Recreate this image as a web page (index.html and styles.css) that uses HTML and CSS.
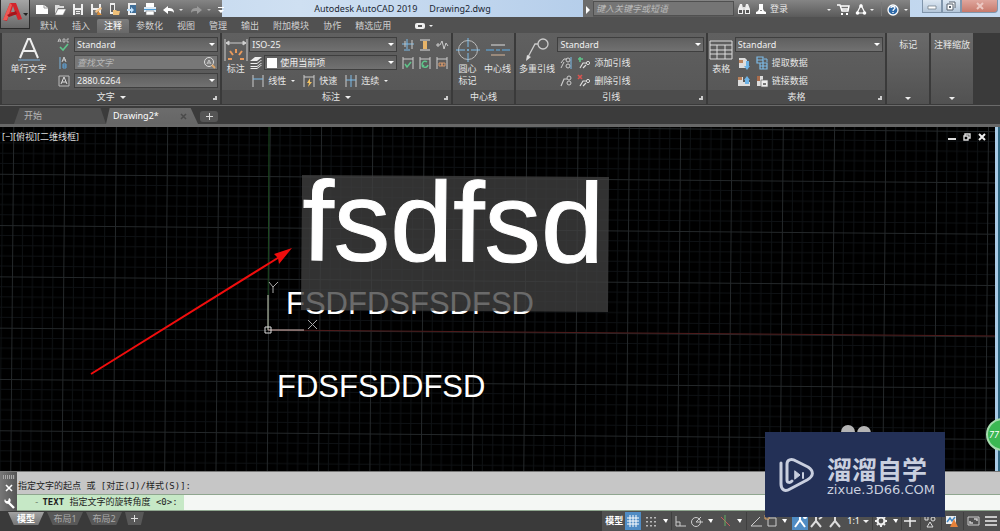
FILE: index.html
```html
<!DOCTYPE html>
<html lang="zh-CN">
<head>
<meta charset="utf-8">
<title>Autodesk AutoCAD 2019</title>
<link rel="stylesheet" href="styles.css">
</head>
<body>
<div class="app">
  <header class="top">
    <button class="logo" aria-label="A">
      <svg width="28" height="28" viewBox="0 0 28 28">
        <path d="M2 20 9 3h6l6 16-4 1-2-5H8l-2 6z" fill="#d3252b"/>
        <path d="m12 6-2 6h4z" fill="#8e8e8e"/>
        <path d="M2 20 9 3l2 2-5 15z" fill="#ef5a55"/>
        <path d="m6 15 9-4 1 3-8 3z" fill="#a3161c"/>
        <path d="M22 13h5l-2 3z" fill="#222"/>
      </svg>
    </button>
    <div class="title-bar">
      <div class="quick">
        <button aria-label="新建"><svg width="14" height="14" viewBox="0 0 14 14"><path d="M1 3h8l4 3v6H1z" fill="#fff"/><path d="M9 3v3h4" fill="none" stroke="#999"/></svg></button>
        <button aria-label="打开"><svg width="14" height="14" viewBox="0 0 14 14"><path d="M2 12V3h4l1 1h4v2H5z" fill="#ddd"/><path d="M5 7h8l-3 6H2z" fill="#fff" stroke="#777" stroke-width=".5"/></svg></button>
        <button aria-label="保存"><svg width="14" height="14" viewBox="0 0 14 14"><path d="M2 2h10v11H2z" fill="#eee"/><path d="M4 2h6v4H4zM4 8h6v5H4z" fill="#777"/><path d="M5 9h4v1H5zM5 11h4v1H5z" fill="#eee"/></svg></button>
        <button aria-label="另存为"><svg width="14" height="14" viewBox="0 0 14 14"><path d="M2 2h10v11H2z" fill="#eee"/><path d="M4 2h6v4H4zM4 8h6v5H4z" fill="#777"/><path d="m6 9 6-4 1 2-6 4z" fill="#f3c58d"/><path d="m9 9 4 4H8z" fill="#d98a32"/></svg></button>
        <button aria-label="从 Web 打开"><svg width="14" height="14" viewBox="0 0 14 14"><path d="M3 1h5v11H3z" fill="#eee"/><path d="M4 3h3v7H4z" fill="#666"/><path d="M6 13V8h3l1 1h3l-1 4z" fill="#efc078"/></svg></button>
        <button aria-label="保存到 Web"><svg width="14" height="14" viewBox="0 0 14 14"><path d="M3 1h8v12H3z" fill="#eee"/><path d="M5 3h6v8H5z" fill="#3f6e98"/><path d="M2 7h4V5l3 3-3 3V9H2z" fill="#bfe2ff"/></svg></button>
        <button aria-label="打印"><svg width="14" height="14" viewBox="0 0 14 14"><path d="M3 1h8v4H3z" fill="#fff"/><path d="M1 5h12v5H1z" fill="#dce9f4"/><path d="M1 7h12v1H1z" fill="#4b9bd6"/><path d="M3 9h8v4H3z" fill="#fff" stroke="#777" stroke-width=".6"/></svg></button>
        <button class="wide" aria-label="放弃"><svg width="24" height="14" viewBox="0 0 24 14"><path d="M2 8l5-4v2c4 0 6 1 6 5-1-2-3-2-6-2v3z" fill="#fff"/><path d="M18 7h4l-2 2z" fill="#ddd"/></svg></button>
        <button class="wide" aria-label="重做"><svg width="24" height="14" viewBox="0 0 24 14"><path d="M13 8 8 4v2c-4 0-6 1-6 5 1-2 3-2 6-2v3z" fill="#9a9a9a"/><path d="M18 7h4l-2 2z" fill="#aaa"/></svg></button>
        <button aria-label="自定义"><svg width="12" height="14" viewBox="0 0 12 14"><path d="M1 5h6v1H1zM1 8h6l-3 3z" fill="#fff"/></svg></button>
      </div>
      <div class="title"><span>Autodesk AutoCAD 2019</span><span>Drawing2.dwg</span></div>
      <div class="info">
        <button class="expand" aria-label="展开"><svg width="10" height="14" viewBox="0 0 10 14"><path d="M3 4l4 4-4 4z" fill="#fff"/></svg></button>
        <input class="search" type="text" placeholder="键入关键字或短语" aria-label="搜索">
        <button aria-label="查找"><svg width="16" height="14" viewBox="0 0 16 14"><path d="M4 2h2l1 4v6H2V7zM10 2h2l2 5v5H9V6z" fill="#eee"/><path d="M3 8h3v3H3zM10 8h3v3h-3z" fill="#555"/><path d="M7 5h2v3H7z" fill="#ddd"/></svg></button>
        <button class="login"><svg width="12" height="14" viewBox="0 0 12 14"><path d="M4 2h4v5l1 2 2 1v2H1v-2l2-1 1-2z" fill="#fff"/><path d="M5 8h2v1H5z" fill="#888"/></svg>登录</button>
        <button aria-label="商店"><svg width="30" height="14" viewBox="0 0 30 14"><path d="M2 7h4l-2 2z" fill="#eee"/><path d="M12 3h3l2 6h6l1-5h-8M16 7h8" fill="none" stroke="#fff" stroke-width="1.4"/><path d="M16 11h2v2h-2zM21 11h2v2h-2z" fill="#fff"/></svg></button>
        <button aria-label="应用程序"><svg width="20" height="14" viewBox="0 0 20 14"><path d="m6 3 4 8H2z" fill="none" stroke="#fff" stroke-width="1.2"/><circle cx="6" cy="4" r="1.8" fill="#fff"/><circle cx="2.5" cy="11" r="1.8" fill="#fff"/><circle cx="9.5" cy="11" r="1.8" fill="#fff"/><path d="M15 7h4l-2 2z" fill="#eee"/></svg></button>
        <button class="help" aria-label="帮助"><svg width="24" height="14" viewBox="0 0 24 14"><circle cx="7" cy="8" r="5" fill="#2f6aa8" stroke="#fff" stroke-width="1.3"/><path d="M5 6c0-2 4-2 4 0 0 1-2 1-2 3M7 10v1" fill="none" stroke="#fff" stroke-width="1.3"/><path d="M18 7h4l-2 2z" fill="#eee"/></svg></button>
      </div>
      <div class="window-buttons">
        <button aria-label="最小化"><svg width="12" height="10" viewBox="0 0 12 10"><path d="M2 5h8v3H2z" fill="#fff" stroke="#66727e" stroke-width=".7"/></svg></button>
        <button aria-label="还原"><svg width="12" height="10" viewBox="0 0 12 10"><path d="M4 1h6v6M2 3h6v6H2z" fill="#fff" stroke="#56616c"/><path d="M4 5h2v2H4z" fill="#56616c"/></svg></button>
        <button class="close" aria-label="关闭"><svg width="12" height="10" viewBox="0 0 12 10"><path d="m3 2 6 6M9 2 3 8" stroke="#ecc8c2" stroke-width="2"/></svg></button>
      </div>
    </div>
    <nav class="menu">
      <button>默认</button><button>插入</button><button class="active">注释</button><button>参数化</button><button>视图</button><button>管理</button><button>输出</button><button>附加模块</button><button>协作</button><button>精选应用</button>
      <button class="menu-toggle" aria-label="功能区显示"><svg width="18" height="8" viewBox="0 0 18 8"><rect y="1" width="10" height="6" rx="2" fill="#eee"/><path d="M3 3h4v2H3z" fill="#555"/><path d="M14 3h4l-2 2z" fill="#eee"/></svg></button>
    </nav>
  </header>

  <section class="ribbon">
    <div class="panel p-text">
      <div class="panel-body">
        <button class="big"><svg width="26" height="26" viewBox="0 0 26 26"><path d="M4 21 12 2h2l8 19M7 14h12" fill="none" stroke="#eee" stroke-width="2"/><path d="M2 23h22" stroke="#76a9d6"/></svg><span>单行文字</span><i class="caret"></i></button>
        <div class="rows">
          <div class="row"><svg class="ic" width="14" height="14" viewBox="0 0 14 14"><path d="m1 4 1-3h1l1 3M1 3h3M6 1v3h2V1zM12 1h-2v3h2" fill="none" stroke="#ccc" stroke-width=".8"/><path d="m3 9 3 3 5-6" fill="none" stroke="#5fc48a" stroke-width="1.6"/></svg><label class="pick"><select aria-label="文字样式"><option>Standard</option></select></label></div>
          <div class="row"><svg class="ic" width="14" height="14" viewBox="0 0 14 14"><path d="M3 1v12" stroke="#7bb4de"/><path d="m5 6 2-5 2 5M6 4h3" fill="none" stroke="#ccc"/><path d="M6 8h3v4H6zM6 10h3" fill="none" stroke="#5fa3d8"/></svg><div class="find"><input type="text" placeholder="查找文字" aria-label="查找文字"><svg width="14" height="13" viewBox="0 0 14 13"><circle cx="6" cy="6" r="4.5" fill="none" stroke="#ddd"/><path d="m4 8 2-4 2 4M5 7h2" fill="none" stroke="#ddd" stroke-width=".8"/><path d="m9 9 3 3" stroke="#d8a368" stroke-width="2"/></svg></div></div>
          <div class="row"><svg class="ic" width="14" height="14" viewBox="0 0 14 14"><path d="M2 2h10v10H2z" fill="none" stroke="#bbb"/><path d="m4 10 3-7 3 7M5 8h4" fill="none" stroke="#ddd"/></svg><label class="pick"><select aria-label="文字高度"><option>2880.6264</option></select></label></div>
        </div>
      </div>
      <div class="panel-title"><span>文字</span><i class="caret"></i><i class="corner"></i></div>
    </div>

    <div class="panel p-dim">
      <div class="panel-body">
        <button class="big slim"><svg width="24" height="26" viewBox="0 0 24 26"><path d="M1 2v22M23 2v22M2 6h20M2 6l3-2v4zM22 6l-3-2v4z" fill="#ddd" stroke="#ccc"/><path d="m12 12v4M6 14l3 4M18 14l-3 4M4 22h4M16 22h4" stroke="#e99a5c" stroke-width="2"/></svg><span>标注</span></button>
        <div class="rows">
          <div class="row"><label class="pick"><select aria-label="标注样式"><option>ISO-25</option></select></label>
            <span class="trio">
              <svg width="14" height="14" viewBox="0 0 14 14"><path d="M1 6h12M6 1v10M3 12h6" stroke="#7dbbe8"/><path d="M11 2v9M4 3v6" stroke="#ccc"/></svg>
              <svg width="14" height="14" viewBox="0 0 14 14"><path d="M2 2h10M2 12h10" stroke="#ddd"/><path d="M5 3h4v8H5z" fill="#e7b469"/></svg>
              <svg width="14" height="14" viewBox="0 0 14 14"><path d="M1 7h4l2-4 2 8 2-6 2 3M3 5v4" fill="none" stroke="#ccc"/></svg>
            </span></div>
          <div class="row"><svg class="ic" width="14" height="14" viewBox="0 0 14 14"><path d="m1 5 5-4h7L8 5zM1 8l1-1h6l4-3h1L8 8zM1 11l1-1h6l4-3h1l-5 4zM1 13l1-1h6l4-3h1l-5 4z" fill="#eee"/></svg><label class="pick swatch"><select aria-label="标注图层"><option>使用当前项</option></select></label>
            <span class="trio">
              <svg width="14" height="14" viewBox="0 0 14 14"><path d="M2 1v12M12 1v12M2 3h10" stroke="#ccc"/><path d="m4 8 2 3 4-5" fill="none" stroke="#5fc48a" stroke-width="1.5"/></svg>
              <svg width="14" height="14" viewBox="0 0 14 14"><path d="M2 1v12M12 1v12M2 3h10" stroke="#ccc"/><path d="M9 6a3 3 0 1 0 1 3M4 11l2-2" fill="none" stroke="#5fc48a" stroke-width="1.5"/></svg>
              <svg width="14" height="14" viewBox="0 0 14 14"><path d="M2 1v12M12 1v12M2 3h10" stroke="#ccc"/><path d="M4 7h3v3H4zM7 7h3v3H7z" fill="none" stroke="#d7986a"/></svg>
            </span></div>
          <div class="row tools">
            <button><svg width="14" height="14" viewBox="0 0 14 14"><path d="M2 1v12M12 1v12" stroke="#ccc"/><path d="M2 5h10" stroke="#7dbbe8"/></svg>线性<i class="caret"></i></button>
            <button><svg width="14" height="14" viewBox="0 0 14 14"><path d="M2 1v12M12 1v12M2 3h10" stroke="#ccc"/><path d="m8 4-3 5h2l-1 4 4-5H8z" fill="#f0c060"/></svg>快速</button>
            <button><svg width="14" height="14" viewBox="0 0 14 14"><path d="M2 1v12M12 1v12" stroke="#ccc"/><path d="M7 1v12M2 6h10" stroke="#7dbbe8"/></svg>连续<i class="caret"></i></button>
          </div>
        </div>
      </div>
      <div class="panel-title"><span>标注</span><i class="caret"></i><i class="corner"></i></div>
    </div>

    <div class="panel p-center">
      <div class="panel-body">
        <button class="big half"><svg width="24" height="26" viewBox="0 0 24 26"><circle cx="12" cy="13" r="9.5" fill="none" stroke="#bbb"/><path d="M12 1v9M12 12v2M12 16v9M0 13h9M11 13h2M15 13h9" stroke="#7dbbe8"/></svg><span>圆心<br>标记</span></button>
        <button class="big half"><svg width="24" height="26" viewBox="0 0 24 26"><path d="M5 8h14" stroke="#ddd"/><path d="M5 18h14" stroke="#d8b79a"/><path d="M0 13h8M10 13h4M16 13h8" stroke="#5fb0ea"/></svg><span>中心线</span></button>
      </div>
      <div class="panel-title"><span>中心线</span></div>
    </div>

    <div class="panel p-leader">
      <div class="panel-body">
        <button class="big mid"><svg width="26" height="26" viewBox="0 0 26 26"><circle cx="19" cy="7" r="5" fill="none" stroke="#ccc" stroke-width="1.3"/><path d="M14 7h-3L4 20" fill="none" stroke="#ccc" stroke-width="1.3"/><path d="m2 24 1-6 4 2z" fill="#ddd"/></svg><span>多重引线</span></button>
        <div class="rows">
          <div class="row"><label class="pick"><select aria-label="多重引线样式"><option>Standard</option></select></label></div>
          <div class="row tools tight">
            <button aria-label="对齐"><svg width="14" height="14" viewBox="0 0 14 14"><path d="m2 12 3-6M5 3h3M2 7l3-4" fill="none" stroke="#ccc"/><circle cx="9" cy="4" r="2" fill="none" stroke="#ccc"/><circle cx="9" cy="10" r="2" fill="none" stroke="#ccc"/><path d="M12 1v12" stroke="#7dbbe8"/></svg></button>
            <button><svg width="14" height="14" viewBox="0 0 14 14"><path d="M1 3h5M3 1v5" stroke="#5fc48a" stroke-width="1.6"/><path d="m3 12 3-5h3M6 12l3-3" fill="none" stroke="#ddd" stroke-width="1.2"/><circle cx="11" cy="7" r="1.6" fill="none" stroke="#ddd"/></svg>添加引线</button>
          </div>
          <div class="row tools tight">
            <button aria-label="合并"><svg width="14" height="14" viewBox="0 0 14 14"><path d="m2 12 3-7h3" fill="none" stroke="#ccc" stroke-width="1.2"/><circle cx="10" cy="4" r="2" fill="none" stroke="#ccc"/><circle cx="10" cy="9" r="2" fill="none" stroke="#ccc"/></svg></button>
            <button><svg width="14" height="14" viewBox="0 0 14 14"><path d="m1 1 4 4M5 1 1 5" stroke="#d9534f" stroke-width="1.6"/><path d="m3 12 3-5h3M6 12l3-3" fill="none" stroke="#ddd" stroke-width="1.2"/><circle cx="11" cy="7" r="1.6" fill="none" stroke="#ddd"/></svg>删除引线</button>
          </div>
        </div>
      </div>
      <div class="panel-title"><span>引线</span><i class="corner"></i></div>
    </div>

    <div class="panel p-table">
      <div class="panel-body">
        <button class="big slim"><svg width="24" height="26" viewBox="0 0 24 26"><path d="M1 4h22v18H1zM1 8h22M1 13h22M1 17h22M8 8v14M16 8v14" fill="none" stroke="#ddd"/></svg><span>表格</span></button>
        <div class="rows">
          <div class="row"><label class="pick"><select aria-label="表格样式"><option>Standard</option></select></label></div>
          <div class="row tools tight">
            <button aria-label="下载源"><svg width="14" height="14" viewBox="0 0 14 14"><path d="M2 2h6l2 2v8H2z" fill="#ddd"/><path d="M2 4h4v3H2z" fill="#b9825c"/><path d="M9 5v5H7l3 4 3-4h-1V5z" fill="#6db3e6"/></svg></button>
            <button><svg width="14" height="14" viewBox="0 0 14 14"><path d="M2 1h6v3H2zM2 4h6v3H2zM5 7h7v3H5zM5 10h7v3H5zM8 7v6" fill="none" stroke="#7dbbe8" stroke-width="1.2"/><path d="M9 3h3v3" fill="none" stroke="#7dbbe8"/></svg>提取数据</button>
          </div>
          <div class="row tools tight">
            <button aria-label="上载源"><svg width="14" height="14" viewBox="0 0 14 14"><path d="M1 3h5v9H1zM6 8h7v4H6z" fill="#ddd"/><path d="M1 3h4v3H1z" fill="#b9825c"/><path d="M8 10V6H7l3-4 3 4h-1v4z" fill="#6db3e6"/></svg></button>
            <button><svg width="14" height="14" viewBox="0 0 14 14"><path d="M2 2h6v10H2z" fill="#ddd"/><path d="M2 2h3v5H2z" fill="#a96c4c"/><path d="M6 6h7v7H6z" fill="#eee" stroke="#666" stroke-width=".7"/><path d="M8 9h3v2H8z" fill="#777"/></svg>链接数据</button>
          </div>
        </div>
      </div>
      <div class="panel-title"><span>表格</span><i class="corner"></i></div>
    </div>

    <button class="panel folded"><span>标记</span><i class="caret"></i></button>
    <button class="panel folded"><span>注释缩放</span><i class="caret"></i></button>
    <div class="ribbon-rest"></div>
  </section>

  <nav class="files">
    <button class="file">开始</button>
    <button class="file current"><span>Drawing2*</span><svg width="7" height="7" viewBox="0 0 7 7"><path d="m1 1 5 5M6 1 1 6" stroke="#4a4a4a" stroke-width="1.5"/></svg></button>
    <button class="add" aria-label="新图形"><svg width="7" height="7" viewBox="0 0 7 7"><path d="M0 3h7v1H0zM3 0h1v7H3z" fill="#ddd"/></svg></button>
  </nav>

  <main class="canvas">
    <svg class="drawing" width="100%" height="100%">
      <defs>
        <pattern id="grid" width="513" height="513" patternUnits="userSpaceOnUse" patternTransform="translate(268 203) rotate(.5) scale(.1)">
          <path d="M103 0v513M205 0v513M308 0v513M410 0v513M0 103h513M0 205h513M0 308h513M0 410h513" stroke="#0e1114" stroke-width="10"/>
          <path d="M5 0v513M0 5h513" stroke="#24282a" stroke-width="10"/>
        </pattern>
      </defs>
      <rect width="100%" height="100%" fill="url(#grid)"/>
      <path d="M269 0l-1 203" stroke="#1c4a20"/>
      <path d="M268 203l732 6" stroke="#4f1b1b"/>
      <text class="cad" x="286" y="187">FSDFDSFSDFSD</text>
      <text class="cad" x="277" y="270">FDSFSDDFSD</text>
      <path d="M302 48l307 2-1 135-307-2z" fill="#404040" fill-opacity=".78"/>
      <text class="cad-large" x="302" y="133" transform="rotate(.5 302 133)">fsdfsd</text>
      <path d="M268 168v35h36" fill="none" stroke="#c9bdb8"/>
      <path d="M265 200h6v6h-6z" fill="none" stroke="#ddd"/>
      <path d="m269 155 4 5 5-5M273 160v6M308 193l9 9M317 193l-9 9" fill="none" stroke="#aaa"/>
      <path d="m91 247 190-118" stroke="#f00d0d" stroke-width="2"/>
      <path d="m292 121-18 6 4 4 1 6z" fill="#f00d0d"/>
      <ellipse cx="848" cy="305" rx="7" ry="7" fill="#b4b4b4"/><ellipse cx="864" cy="306" rx="7" ry="7" fill="#b4b4b4"/>
    </svg>
    <span class="view-label">[−][俯视][二维线框]</span>
    <div class="view-buttons">
      <button aria-label="最小化视口"><svg width="8" height="8" viewBox="0 0 8 8"><path d="M0 5h8v2H0z" fill="#ddd"/></svg></button>
      <button aria-label="还原视口"><svg width="8" height="8" viewBox="0 0 8 8"><path d="M2 3V1h5v4H5M1 3h4v4H1z" fill="none" stroke="#ddd" stroke-width="1.4"/></svg></button>
      <button aria-label="关闭视口"><svg width="8" height="8" viewBox="0 0 8 8"><path d="m1 1 6 6M7 1 1 7" stroke="#eee" stroke-width="2"/></svg></button>
    </div>
    <div class="edge"></div>
    <div class="bubble">77</div>
  </main>

  <section class="command">
    <div class="handle">
      <i class="dots"></i>
      <button aria-label="关闭"><svg width="8" height="8" viewBox="0 0 8 8"><path d="m1 1 6 6M7 1 1 7" stroke="#fff" stroke-width="1.6"/></svg></button>
      <button aria-label="自定义"><svg width="12" height="12" viewBox="0 0 12 12"><path d="m11 11-6-6" stroke="#fff" stroke-width="2.4"/><path d="M2 2a3 3 0 1 0 4-1L5 4 3 4z" fill="#fff"/></svg></button>
    </div>
    <div class="lines">
      <div class="history">指定文字的起点 或 [对正(J)/样式(S)]:</div>
      <div class="prompt"><label for="cmd"><span class="dash">-</span><b>TEXT</b> 指定文字的旋转角度 &lt;0&gt;:</label><input id="cmd" type="text"></div>
    </div>
  </section>

  <footer class="status">
    <nav class="layouts"><button class="active">模型</button><button>布局1</button><button>布局2</button><button class="plus" aria-label="新建布局"><svg width="7" height="7" viewBox="0 0 7 7"><path d="M0 3h7v1H0zM3 0h1v7H3z" fill="#ddd"/></svg></button></nav>
    <div class="modes">
      <button class="word">模型</button>
      <button class="on" aria-label="栅格"><svg width="16" height="16" viewBox="0 0 16 16"><path d="M5 2v12M8 2v12M11 2v12M2 5h12M2 8h12M2 11h12" stroke="#fff"/></svg></button>
      <button aria-label="捕捉"><svg width="30" height="16" viewBox="0 0 30 16"><path d="M6 4v10M10 4v10M14 4v10" stroke="#ddd" stroke-width="1.5" stroke-dasharray="1.5 2.5"/><path d="M22 6h5l-2 4z" fill="#fff"/></svg></button>
      <button class="sep" aria-label="正交"><svg width="16" height="16" viewBox="0 0 16 16"><path d="M4 3v10h10M4 9h4v4" fill="none" stroke="#ccc"/></svg></button>
      <button aria-label="极轴"><svg width="29" height="16" viewBox="0 0 29 16"><circle cx="8" cy="9" r="4.5" fill="none" stroke="#ccc"/><path d="M8 9h7M8 9l5-5" stroke="#ccc"/><path d="M20 6h5l-2 4z" fill="#fff"/></svg></button>
      <button aria-label="等轴测"><svg width="29" height="16" viewBox="0 0 29 16"><path d="m4 4 9 9" stroke="#c55a5a"/><path d="M8 2v11" stroke="#63b063"/><path d="M20 6h5l-2 4z" fill="#fff"/></svg></button>
      <button class="sep" aria-label="追踪"><svg width="16" height="16" viewBox="0 0 16 16"><path d="M13 4 4 13h11" fill="none" stroke="#ccc"/></svg></button>
      <button aria-label="对象捕捉"><svg width="29" height="16" viewBox="0 0 29 16"><path d="M5 5h8v8H5z" fill="none" stroke="#ccc"/><path d="M2 2h4v4H2z" fill="#555" stroke="#d9a267"/><path d="M19 6h5l-2 4z" fill="#fff"/></svg></button>
      <button class="on" aria-label="注释可见性"><svg width="16" height="16" viewBox="0 0 16 16"><path d="M8 2v5M8 7l-5 7M8 7l5 7" stroke="#fff" stroke-width="2"/><circle cx="13" cy="4" r="2" fill="#fff"/></svg></button>
      <button aria-label="自动缩放"><svg width="18" height="16" viewBox="0 0 18 16"><path d="M8 3v5l-5 6M8 8l5 6" fill="none" stroke="#ddd" stroke-width="2"/><path d="m11 6 3-2" fill="none" stroke="#ddd" stroke-width="2"/></svg></button>
      <button aria-label="注释比例图标"><svg width="18" height="16" viewBox="0 0 18 16"><path d="M9 3v5l-5 6M9 8l5 6" fill="none" stroke="#ddd" stroke-width="2"/></svg></button>
      <button class="word ratio">1:1<i class="caret"></i></button>
      <button class="sep" aria-label="设置"><svg width="28" height="16" viewBox="0 0 28 16"><circle cx="8" cy="8" r="3.5" fill="none" stroke="#eee" stroke-width="2.2"/><path d="M8 2v2M8 12v2M2 8h2M12 8h2M4 4l1 1M11 11l1 1M12 4l-1 1M4 12l1-1" stroke="#eee" stroke-width="2"/><path d="M20 6h5l-2 4z" fill="#fff"/></svg></button>
      <button class="sep" aria-label="注释监视器"><svg width="18" height="16" viewBox="0 0 18 16"><path d="M8 2v12M2 8h12" stroke="#eee" stroke-width="1.5"/></svg></button>
      <button class="sep" aria-label="隔离"><svg width="20" height="16" viewBox="0 0 20 16"><path d="M4 3v4h3V3M9 9l-3 5h6z" fill="none" stroke="#ddd"/><circle cx="12" cy="6" r="2" fill="none" stroke="#ddd"/></svg></button>
      <button class="sep" aria-label="硬件加速"><svg width="21" height="16" viewBox="0 0 21 16"><path d="M4 3h10v8H4z" fill="#eee"/><path d="m5 9 3-4 2 3 3-4" fill="none" stroke="#3d86c4" stroke-width="1.5"/><path d="m12 6 4 8H8z" fill="#e5813a"/></svg></button>
      <button class="sep" aria-label="全屏"><svg width="19" height="16" viewBox="0 0 19 16"><path d="M4 4h11v8H4z" fill="none" stroke="#ccc"/><path d="M10 6h3v2M6 8v2h3" fill="none" stroke="#ccc" stroke-width="1.5"/></svg></button>
      <button aria-label="自定义"><svg width="16" height="16" viewBox="0 0 16 16"><path d="M2 4h12M2 8h12M2 12h12" stroke="#eee" stroke-width="1.5"/></svg></button>
    </div>
  </footer>

  <aside class="brand">
    <svg width="36" height="36" viewBox="0 0 36 36" fill="none" stroke="#c9cfdf" stroke-width="3" stroke-linecap="round" stroke-linejoin="round"><path d="M2 6v21c0 6 4 8 9 5l17-9c7-4 7-9 1-13L17 4c-5-3-9-1-9 3v16c0 3 3 3 5 1"/><path d="m16 14 5 4-5 4z" fill="#c9cfdf" stroke-width="1"/><path d="M24 16v5" stroke-width="2"/></svg>
    <div class="brand-text"><span class="brand-name">溜溜自学</span><span class="brand-site">zixue.3D66.COM</span></div>
  </aside>
</div>
</body>
</html>
```
FILE: styles.css
```css
* { box-sizing: border-box; }
body {
  margin: 0;
  background: #3b3b3b;
  color: #e6e6e6;
  font: 9px/12px "Noto Sans", "Noto Sans CJK SC", sans-serif;
}
button, input, select {
  margin: 0; padding: 0; border: 0; border-radius: 0;
  background: none; color: inherit; font: inherit; outline: 0;
}
svg { display: block; flex: none; }
.app { position: relative; display: flex; flex-direction: column; height: 100vh; overflow: hidden; }

.caret { display: inline-block; border: 3px solid transparent; border-top: 3px solid #eee; border-bottom: 0; }

/* title bar and menu */
.top { position: relative; flex: none; background: #515151; }
.logo {
  position: absolute; left: 0; top: 0; z-index: 1;
  border: 1px solid #2b2b2b; border-top: 0;
  background: linear-gradient(#a5a5a5, #686868);
}
.title-bar { display: flex; height: 17px; background: linear-gradient(90deg, #b9d0ea, #cfe0f2 30%, #b4cdea 60%, #c6daf0); }
.quick { display: flex; align-items: center; gap: 4px; width: 222px; padding-left: 35px; background: linear-gradient(#858585, #5a5a5a); }
.quick .wide { width: 24px; }
.quick button { flex: none; }
.title { flex: 1; display: flex; justify-content: center; align-items: center; gap: 12px; color: #1c2733; white-space: nowrap; }
.info { display: flex; align-items: center; width: 327px; background: linear-gradient(#858585, #5a5a5a); }
.expand { align-self: stretch; background: #6b6b6b; }
.search { flex: 1; min-width: 0; height: 15px; margin-right: 2px; padding: 0 2px; border: 1px solid #505050; background: #757575; font-style: italic; }
.search::placeholder { color: #bcbcbc; }
.login { display: flex; align-items: center; gap: 3px; padding: 0 37px 0 3px; }
.help { margin-left: 6px; padding-left: 4px; border-left: 1px solid #777; }
.window-buttons { display: flex; width: 90px; padding: 0 2px 4px 12px; }
.window-buttons button { flex: 1; display: flex; justify-content: center; align-items: center; border: 1px solid #8095ab; border-top: 0; background: linear-gradient(#dce7f2, #b4c6d9); }
.window-buttons .close { flex: 2; background: linear-gradient(#dfa69d, #c77a6c); border-radius: 0 0 4px 0; }
.menu { display: flex; height: 16px; padding: 2px 0 0 33px; }
.menu button { padding: 0 7px; color: #d0d0d0; white-space: nowrap; }
.menu .active { background: linear-gradient(#7d7d7d, #686868); color: #fff; border-radius: 2px 2px 0 0; }
.menu .menu-toggle { margin-left: 10px; }

/* ribbon */
.ribbon { display: flex; flex: none; gap: 2px; height: 73px; padding: 0 1px 1px 2px; background: #3a3a3a; border-bottom: 1px solid #6a6a6a; }
.panel { display: flex; flex-direction: column; min-width: 0; background: linear-gradient(#606060, #565656); }
.p-text { flex: 219 1 0; }
.p-dim { flex: 229 1 0; }
.p-center { flex: 62 1 0; }
.p-leader { flex: 190 1 0; }
.p-table { flex: 178 1 0; }
.folded { flex: 42 1 0; align-items: center; justify-content: space-between; padding: 6px 0 4px; background: linear-gradient(#6a6a6a, #515151); white-space: nowrap; }
.ribbon-rest { flex: 24 1 0; }
.panel-body { flex: 1; display: flex; min-height: 0; padding: 4px 2px 0 0; }
.panel-title { position: relative; display: flex; justify-content: center; align-items: center; gap: 5px; height: 14px; background: #4c4c4c; }
.corner { position: absolute; right: 3px; bottom: 4px; width: 4px; height: 4px; border: solid #ccc; border-width: 0 2px 2px 0; }
.big { flex: none; display: flex; flex-direction: column; align-items: center; width: 53px; white-space: nowrap; }
.big .caret { margin-top: 3px; border-width: 2px; }
.slim { width: 27px; }
.half { width: 30px; }
.mid { width: 41px; }
.rows { flex: 1; min-width: 0; display: flex; flex-direction: column; gap: 3px; }
.row { display: flex; align-items: center; height: 15px; gap: 1px; }
.ic { margin: 0 2px; }
.p-dim .ic { margin: 0; }
.pick { position: relative; flex: 1; min-width: 0; display: flex; height: 15px; border: 1px solid #3f3f3f; background: linear-gradient(#5f5f5f, #717171); }
.pick select { flex: 1; min-width: 0; padding-left: 2px; appearance: none; color: #f0f0f0; }
.pick::after { content: ""; align-self: center; margin: 0 2px; border: 3px solid transparent; border-top-color: #fff; border-bottom: 0; }
.pick option { color: #222; }
.swatch::before { content: ""; align-self: center; width: 10px; height: 10px; margin: 0 1px 0 2px; background: #fff; }
.find { flex: 1; min-width: 0; display: flex; height: 15px; border: 1px solid #4b4b4b; background: #777; }
.find input { flex: 1; min-width: 0; padding-left: 2px; font-style: italic; }
.find input::placeholder { color: #b8b8b8; }
.trio { display: flex; gap: 3px; margin-left: 3px; }
.tools { gap: 7px; padding-left: 2px; }
.tools button { display: flex; align-items: center; gap: 3px; white-space: nowrap; }
.tools .caret { border-width: 2px; margin-left: 2px; }
.tight { gap: 4px; }

/* document tabs */
.files { display: flex; flex: none; align-items: flex-end; height: 21px; padding: 0 0 0 14px; background: #3b3b3b; border-bottom: 3px solid #686868; }
.file { width: 92px; height: 16px; padding-left: 10px; color: #b5b5b5; text-align: left; background: #515151; clip-path: polygon(6% 0, 94% 0, 100% 100%, 0 100%); }
.current { display: flex; align-items: center; justify-content: space-between; padding: 0 11px 0 7px; color: #fff; background: linear-gradient(#6c6c6c, #666); clip-path: polygon(4% 0, 92% 0, 100% 100%, 0 100%); }
.add { display: flex; justify-content: center; align-items: center; width: 18px; height: 11px; margin: 0 0 2px 2px; border-radius: 3px; background: #555; }

/* drawing area */
.canvas { position: relative; flex: 1; min-height: 0; overflow: hidden; background: #000; }
.drawing { position: absolute; inset: 0; }
.cad { font: 31px "Liberation Sans", sans-serif; fill: #fff; }
.cad-large { font: 113px "Liberation Sans", sans-serif; fill: #fff; stroke: #fff; stroke-width: 1px; }
.view-label { position: absolute; left: 2px; top: 4px; color: #ddd; }
.view-buttons { position: absolute; right: 14px; top: 6px; display: flex; gap: 7px; }
.edge { position: absolute; right: 0; top: 0; bottom: 0; width: 5px; background: #a9cbe6; border-right: 2px solid #2f6680; }
.bubble { position: absolute; right: -19px; bottom: 20px; width: 33px; height: 33px; padding-left: 1px; border: 2px solid #a5dcae; border-radius: 50%; background: #3cb853; color: #fff; font-style: italic; line-height: 29px; }

/* command line */
.command { display: flex; flex: none; height: 40px; font-family: "DejaVu Sans Mono", "Noto Sans CJK SC", monospace; color: #1e1e1e; border-top: 1px solid #777; }
.handle { display: flex; flex-direction: column; align-items: center; justify-content: space-between; width: 17px; padding: 3px 0 2px; background: linear-gradient(90deg, #777, #555); }
.dots { width: 12px; height: 4px; background: repeating-linear-gradient(90deg, #aaa 0 1px, #666 1px 2px); }
.lines { flex: 1; display: flex; flex-direction: column; min-width: 0; background: #c6c6c6; }
.history { flex: 1; padding: 8px 1px 0; }
.prompt { display: flex; height: 17px; border: solid #8fa68f; border-width: 1px 0; background: #f4f7f4; }
.prompt label { flex: none; padding: 1px 6px 0 17px; background: #c6e8c6; white-space: nowrap; }
.dash { margin-right: 3px; color: #6c806c; }
.prompt input { flex: 1; min-width: 0; }

/* status bar */
.status { display: flex; flex: none; justify-content: space-between; height: 20px; background: #3a3a3a; }
.layouts { display: flex; align-items: flex-start; gap: 3px; padding: 1px 0 0 8px; }
.layouts button { width: 36px; height: 13px; background: #585858; color: #aaa; clip-path: polygon(0 0, 100% 0, 84% 100%, 16% 100%); }
.layouts .active { background: linear-gradient(#a2a2a2, #777); color: #fff; font-weight: bold; }
.layouts .plus { display: flex; justify-content: center; align-items: center; width: 19px; }
.modes { display: flex; align-items: center; padding: 0 1px; background: #505050; }
.modes button { display: flex; align-items: center; height: 18px; }
.modes .word { padding: 0 2px; color: #fff; font-weight: bold; }
.modes .ratio { gap: 3px; padding: 0 3px; font-weight: normal; }
.modes .on { background: #4f8cc4; }
.modes .sep { border-left: 1px solid #3f3f3f; }

/* site badge */
.brand { position: absolute; right: 55px; bottom: 14px; z-index: 2; display: flex; align-items: center; gap: 12px; width: 180px; height: 85px; padding-left: 14px; background: #233056; color: #c9cfdf; }
.brand-text { display: flex; flex-direction: column; white-space: nowrap; }
.brand-name { font: bold 25px/30px "Noto Sans CJK SC", sans-serif; }
.brand-site { font: 13px/14px "DejaVu Sans", sans-serif; }
```
